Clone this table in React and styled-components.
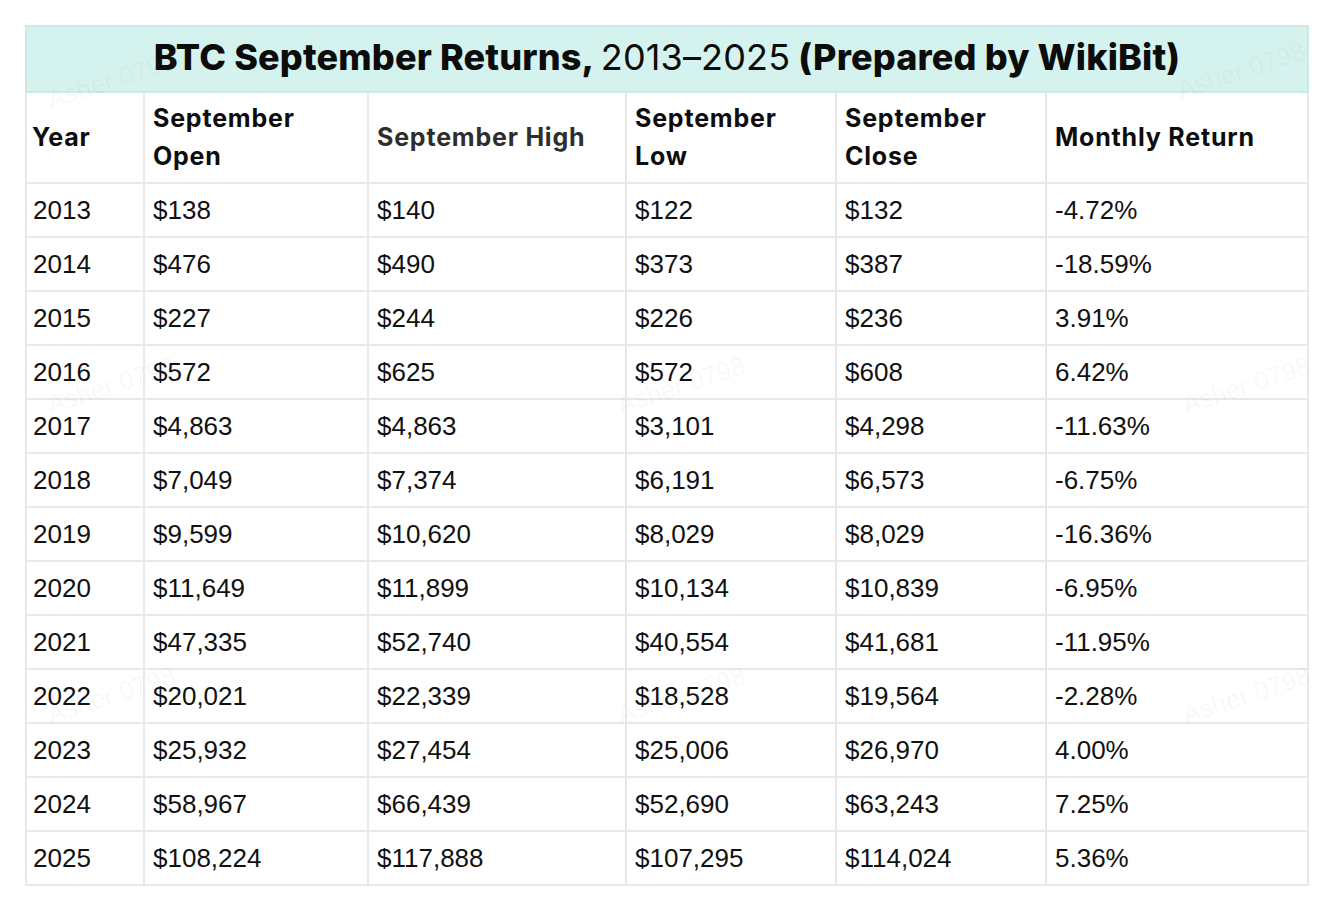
import React from "react";
import styled, { createGlobalStyle } from "styled-components";

const rows = [
    ["2013", "$138", "$140", "$122", "$132", "-4.72%"],
    ["2014", "$476", "$490", "$373", "$387", "-18.59%"],
    ["2015", "$227", "$244", "$226", "$236", "3.91%"],
    ["2016", "$572", "$625", "$572", "$608", "6.42%"],
    ["2017", "$4,863", "$4,863", "$3,101", "$4,298", "-11.63%"],
    ["2018", "$7,049", "$7,374", "$6,191", "$6,573", "-6.75%"],
    ["2019", "$9,599", "$10,620", "$8,029", "$8,029", "-16.36%"],
    ["2020", "$11,649", "$11,899", "$10,134", "$10,839", "-6.95%"],
    ["2021", "$47,335", "$52,740", "$40,554", "$41,681", "-11.95%"],
    ["2022", "$20,021", "$22,339", "$18,528", "$19,564", "-2.28%"],
    ["2023", "$25,932", "$27,454", "$25,006", "$26,970", "4.00%"],
    ["2024", "$58,967", "$66,439", "$52,690", "$63,243", "7.25%"],
    ["2025", "$108,224", "$117,888", "$107,295", "$114,024", "5.36%"],
];

const columns = [
    { label: "Year", width: 118 },
    { label: "September Open", width: 224, wrap: true },
    { label: "September High", width: 258, soft: true },
    { label: "September Low", width: 210, wrap: true },
    { label: "September Close", width: 210, wrap: true },
    { label: "Monthly Return", width: 262 },
];

// faint watermark stamps over the table
const marks = [
    { x: 20, y: 40 }, { x: 1150, y: 30 },
    { x: 20, y: 345 }, { x: 590, y: 345 }, { x: 1155, y: 345 },
    { x: 20, y: 655 }, { x: 590, y: 655 }, { x: 1155, y: 655 },
];

const App = () => {
    return (
        <Page>
            <GlobalStyle />
            <Card>
                <Table>
                    <colgroup>
                        {columns.map((col) => (
                            <col key={col.label} style={{ width: col.width }} />
                        ))}
                    </colgroup>
                    <thead>
                        <tr>
                            <Title colSpan={6}>
                                BTC September Returns, <Light>2013–2025</Light> (Prepared by WikiBit)
                            </Title>
                        </tr>
                        <tr>
                            {columns.map((col, index) => (
                                <Head key={col.label} $soft={col.soft} $first={index === 0}>
                                    {col.wrap ? (
                                        <>
                                            {col.label.split(" ")[0]}
                                            <br />
                                            {col.label.split(" ")[1]}
                                        </>
                                    ) : (
                                        col.label
                                    )}
                                </Head>
                            ))}
                        </tr>
                    </thead>
                    <tbody>
                        {rows.map((row) => (
                            <tr key={row[0]}>
                                {row.map((value, index) => (
                                    <Cell key={index} $first={index === 0}>
                                        {value}
                                    </Cell>
                                ))}
                            </tr>
                        ))}
                    </tbody>
                </Table>
                {marks.map((m, i) => (
                    <Mark key={i} style={{ left: m.x, top: m.y }}>
                        Asher 0798
                    </Mark>
                ))}
            </Card>
        </Page>
    );
};

const GlobalStyle = createGlobalStyle`
    html, body {
        margin: 0;
        padding: 0;
        background: #ffffff;
    }
`;

const Page = styled.div`
    width: 1332px;
    height: 910px;
    padding: 25px 0 0 25px;
    box-sizing: border-box;
    background: #ffffff;
`;

const Card = styled.div`
    position: relative;
    width: 1282px;
`;

const Table = styled.table`
    width: 1282px;
    table-layout: fixed;
    border-collapse: collapse;
    border: 2px solid #e4e6e6;
    font-family: "Liberation Sans", Arial, sans-serif;
    color: #111111;
`;

const Title = styled.th`
    height: 66px;
    padding: 0 0 4px;
    box-sizing: border-box;
    background: #d5f3ee;
    border: 2px solid #cfe9e5;
    text-align: center;
    font-family: Inter, "Liberation Sans", sans-serif;
    font-weight: 800;
    font-size: 36px;
    letter-spacing: 0.15px;
    color: #0c0c0c;
`;

const Light = styled.span`
    font-weight: 400;
`;

const Head = styled.th`
    height: 91px;
    padding: 0 6px 2px ${(p) => (p.$first ? "5px" : "8px")};
    box-sizing: border-box;
    border: 2px solid #e8e8e8;
    text-align: left;
    vertical-align: middle;
    font-family: Inter, "Liberation Sans", sans-serif;
    font-weight: 700;
    font-size: 25px;
    letter-spacing: 0.8px;
    line-height: 38px;
    color: ${(p) => (p.$soft ? "#2e2e2e" : "#0d0d0d")};
`;

const Cell = styled.td`
    height: 54px;
    padding: 0 6px 0 ${(p) => (p.$first ? "6px" : "8px")};
    box-sizing: border-box;
    border: 2px solid #e8e8e8;
    font-size: 26px;
    line-height: 28px;
    vertical-align: middle;
    white-space: nowrap;
`;

const Mark = styled.div`
    position: absolute;
    transform: rotate(-18deg);
    font-family: "Liberation Sans", Arial, sans-serif;
    font-size: 26px;
    color: rgba(120, 130, 140, 0.06);
    pointer-events: none;
    white-space: nowrap;
`;

export default App;
